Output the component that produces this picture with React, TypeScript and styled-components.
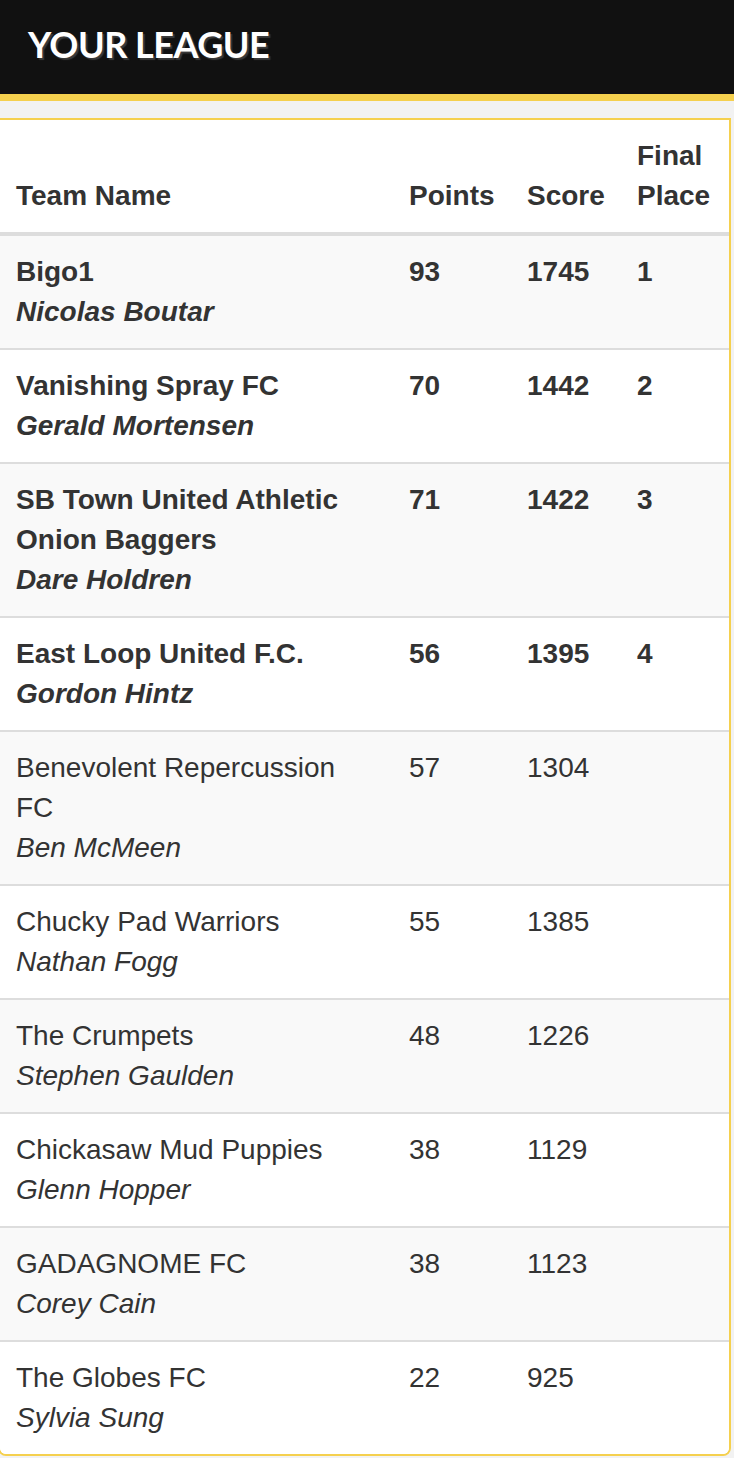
import { createGlobalStyle } from "styled-components";
import styled from "styled-components";

const GlobalStyle = createGlobalStyle`
  html, body {
    margin: 0;
    padding: 0;
    background: #f2f2f2;
  }
  body {
    font-family: "Liberation Sans", Arial, sans-serif;
    color: #333;
    overflow-x: hidden;
  }
`;

const Page = styled.div`
  width: 734px;
  min-height: 1458px;
  background: #f2f2f2;
`;

const Header = styled.header`
  height: 94px;
  background: #111;
  border-bottom: 7px solid #f5d04e;
  display: flex;
  align-items: center;
  padding-left: 28px;
`;

const Title = styled.h1`
  margin: 0 0 6px;
  font-family: Lato, "Liberation Sans", sans-serif;
  font-weight: 700;
  font-size: 36px;
  letter-spacing: -0.5px;
  color: #fff;
  text-shadow: 2px 2px 1px #3a3a3a;
`;

const Panel = styled.div`
  margin: 17px 3px 0 -2px;
  background: #fff;
  border: 2px solid #f5d04e;
  border-radius: 0 0 8px 8px;
  overflow: hidden;
`;

const Table = styled.table`
  width: 100%;
  table-layout: fixed;
  border-collapse: collapse;
  font-family: "Liberation Sans", Arial, sans-serif;
  font-size: 28px;
  line-height: 40px;
  color: #333;
`;

/* widths are content widths; each cell adds 16px padding on both sides */
const Th = styled.th<{ $w?: number }>`
  width: ${(p) => (p.$w ? `${p.$w}px` : "auto")};
  text-align: left;
  vertical-align: bottom;
  font-weight: 700;
  padding: 16px;
  border-bottom: 4px solid #ddd;
`;

const Row = styled.tr<{ $striped: boolean; $top: boolean }>`
  background: ${(p) => (p.$striped ? "#f9f9f9" : "#fff")};
  font-weight: ${(p) => (p.$top ? 700 : 400)};
`;

const Td = styled.td`
  vertical-align: top;
  padding: 16px;
  border-top: 2px solid #ddd;
`;

const Manager = styled.div`
  font-style: italic;
`;

const teams = [
  { name: "Bigo1", manager: "Nicolas Boutar", points: 93, score: 1745, place: "1" },
  { name: "Vanishing Spray FC", manager: "Gerald Mortensen", points: 70, score: 1442, place: "2" },
  { name: "SB Town United Athletic Onion Baggers", manager: "Dare Holdren", points: 71, score: 1422, place: "3" },
  { name: "East Loop United F.C.", manager: "Gordon Hintz", points: 56, score: 1395, place: "4" },
  { name: "Benevolent Repercussion FC", manager: "Ben McMeen", points: 57, score: 1304, place: "" },
  { name: "Chucky Pad Warriors", manager: "Nathan Fogg", points: 55, score: 1385, place: "" },
  { name: "The Crumpets", manager: "Stephen Gaulden", points: 48, score: 1226, place: "" },
  { name: "Chickasaw Mud Puppies", manager: "Glenn Hopper", points: 38, score: 1129, place: "" },
  { name: "GADAGNOME FC", manager: "Corey Cain", points: 38, score: 1123, place: "" },
  { name: "The Globes FC", manager: "Sylvia Sung", points: 22, score: 925, place: "" },
];

export default function App() {
  return (
    <Page>
      <GlobalStyle />
      <Header>
        <Title>YOUR LEAGUE</Title>
      </Header>
      <Panel>
        <Table>
          <thead>
            <tr>
              <Th>Team Name</Th>
              <Th $w={86}>Points</Th>
              <Th $w={78}>Score</Th>
              <Th $w={76}>
                Final
                <br />
                Place
              </Th>
            </tr>
          </thead>
          <tbody>
            {teams.map((t, i) => (
              <Row key={t.name} $striped={i % 2 === 0} $top={t.place !== ""}>
                <Td>
                  <div>{t.name}</div>
                  <Manager>{t.manager}</Manager>
                </Td>
                <Td>{t.points}</Td>
                <Td>{t.score}</Td>
                <Td>{t.place}</Td>
              </Row>
            ))}
          </tbody>
        </Table>
      </Panel>
    </Page>
  );
}
